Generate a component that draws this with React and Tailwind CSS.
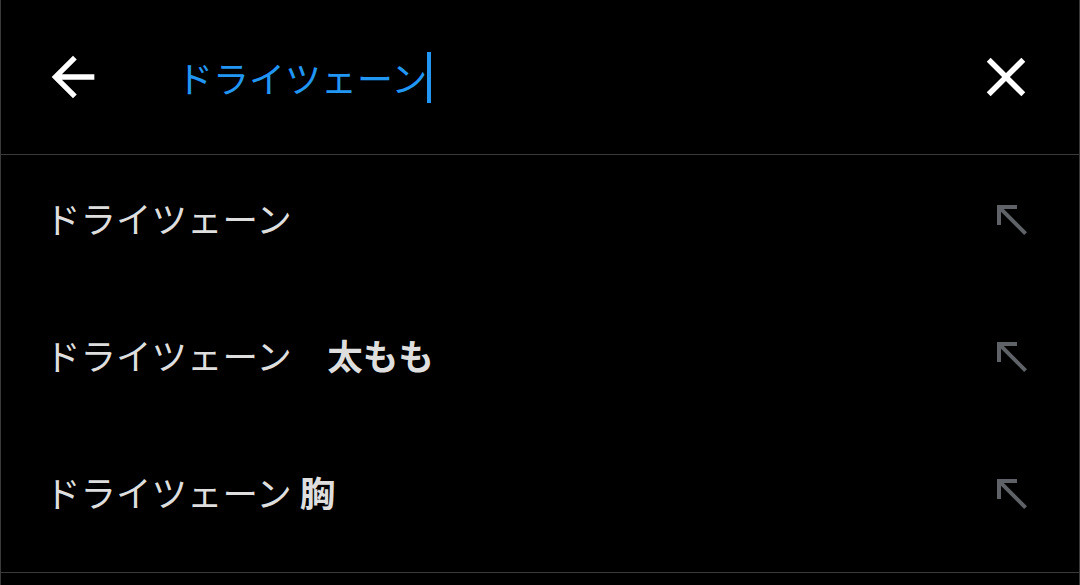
import React from "react";

const font = { fontFamily: '"Noto Sans CJK JP", "Noto Sans", sans-serif' };

function NorthWest() {
  return (
    <svg width="48" height="48" viewBox="0 0 24 24" fill="#5f6368">
      <path d="M5 15h2V8.41L18.59 20 20 18.59 8.41 7H15V5H5z" />
    </svg>
  );
}

function Row({ children }) {
  return (
    <div className="h-[137px] flex items-center justify-between pl-[44px] pr-[44px]">
      <div className="text-[35.5px] text-[#dedede] leading-none pb-[11px] whitespace-pre" style={font}>
        {children}
      </div>
      <div className="pb-[10px]">
        <NorthWest />
      </div>
    </div>
  );
}

export default function App() {
  return (
    <div className="w-[1080px] h-[585px] bg-black border-x border-[#3a3a3a] flex flex-col">
      <div className="h-[155px] border-b border-[#3a3a3a] flex items-center pl-[40px] pr-[40px]">
        <svg width="64" height="64" viewBox="0 0 24 24" fill="#ffffff">
          <path d="M20 11H7.83l5.59-5.59L12 4l-8 8 8 8 1.41-1.41L7.83 13H20v-2z" />
        </svg>
        <div className="ml-[72px] flex-1 flex items-center">
          <span className="text-[36px] leading-none text-[#2196f3]" style={font}>
            ドライツェーン
          </span>
          <span className="w-[4px] h-[51px] bg-[#2196f3]" />
        </div>
        <svg width="66" height="66" viewBox="0 0 24 24" fill="#ffffff">
          <path d="M19 6.41L17.59 5 12 10.59 6.41 5 5 6.41 10.59 12 5 17.59 6.41 19 12 13.41 17.59 19 19 17.59 13.41 12z" />
        </svg>
      </div>
      <Row>ドライツェーン</Row>
      <Row>
        ドライツェーン　<span className="font-bold">太もも</span>
      </Row>
      <Row>
        ドライツェーン <span className="font-bold">胸</span>
      </Row>
      <div className="h-[6px]" />
      <div className="border-t border-[#3a3a3a]" />
    </div>
  );
}
